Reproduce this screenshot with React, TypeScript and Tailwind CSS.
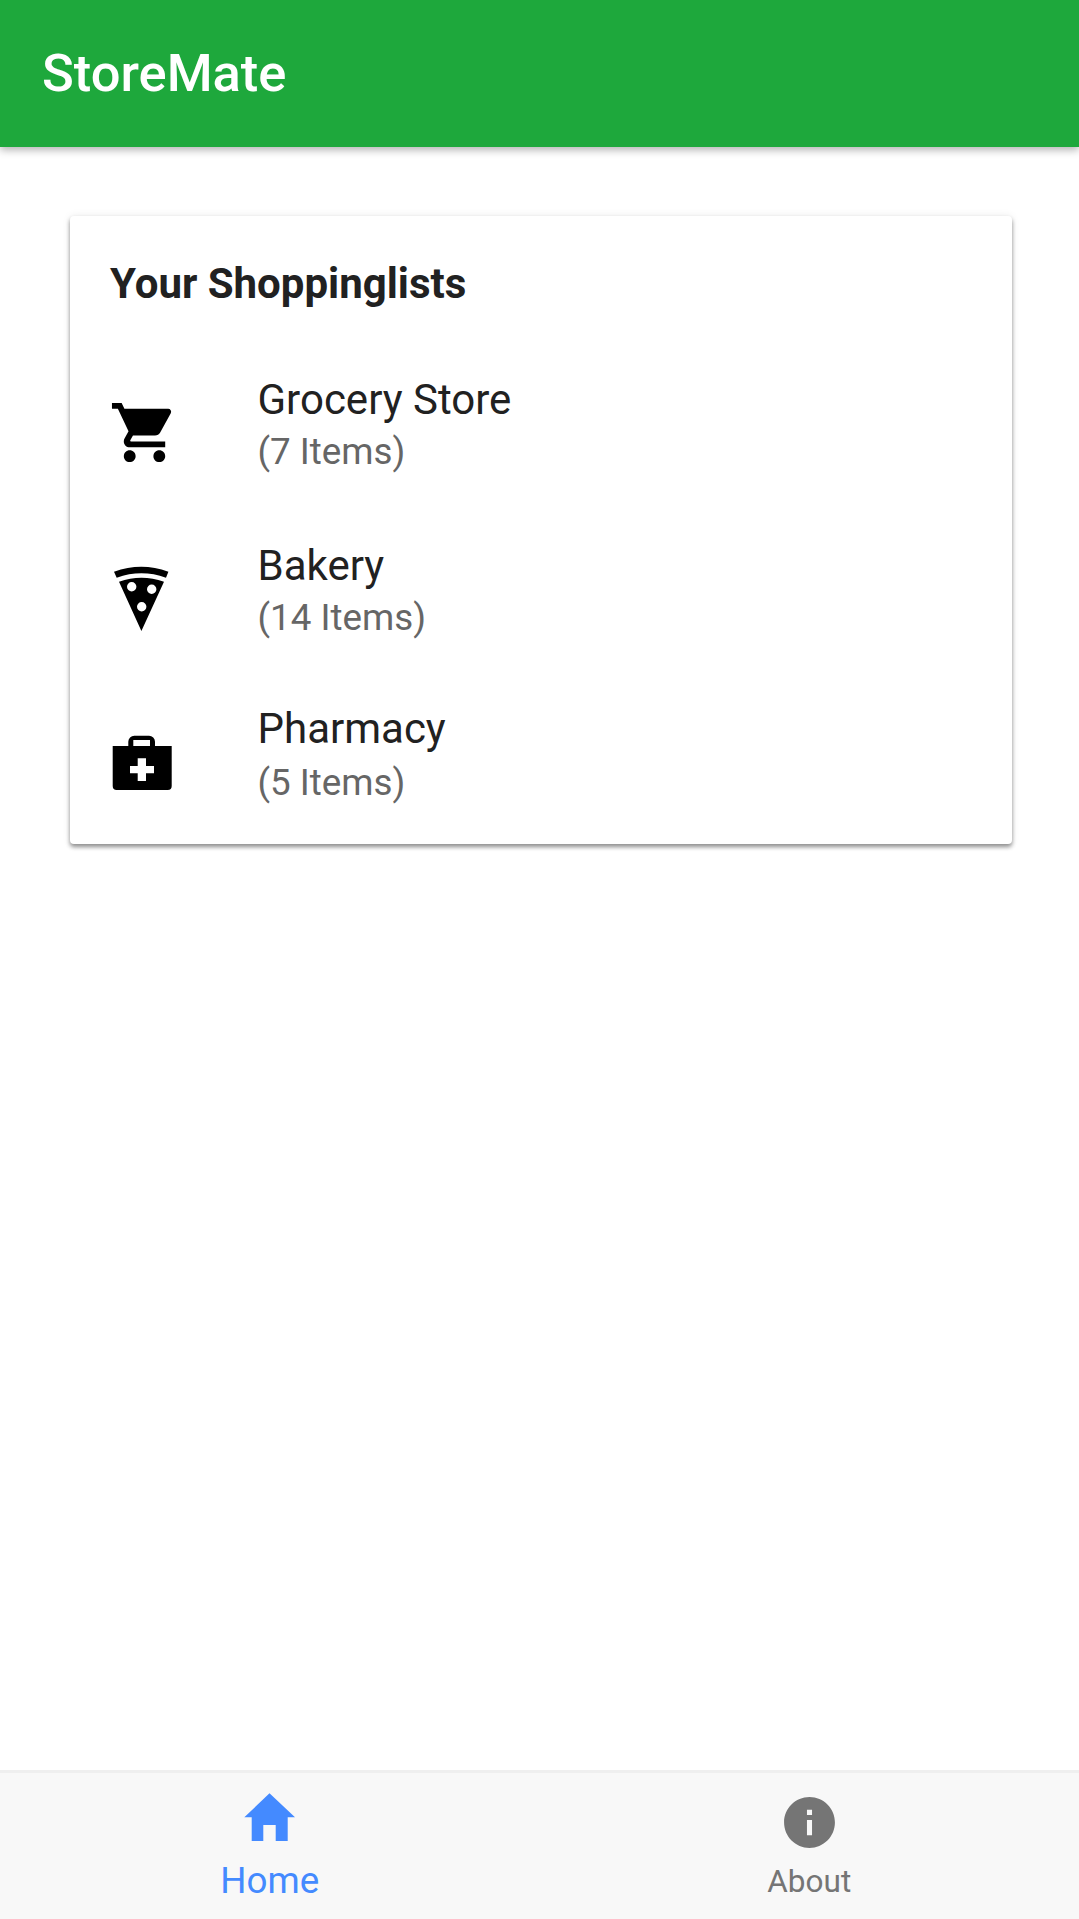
import { MdShoppingCart } from "react-icons/md";

function CartIcon() {
  return <MdShoppingCart className="w-[71px] h-[71px] text-black" />;
}

function PizzaIcon() {
  return (
    <svg viewBox="3.6 0 72 72" className="w-[72px] h-[72px] text-black" fill="currentColor" fillRule="evenodd">
      <path d="M8.6 8.7Q36 -1.2 63 8.7L60.6 14.7Q36 5.8 11.3 14.7Z" />
      <path d="M13.6 18.7Q36 10.8 58.6 18.7L36 68ZM26.3 19A4.7 4.7 0 1 0 26.3 28.4A4.7 4.7 0 1 0 26.3 19ZM46.3 21.6A4.7 4.7 0 1 0 46.3 31A4.7 4.7 0 1 0 46.3 21.6ZM36.3 39A4.7 4.7 0 1 0 36.3 48.4A4.7 4.7 0 1 0 36.3 39Z" />
    </svg>
  );
}

function KitIcon() {
  return (
    <svg viewBox="0 0 72 72" className="w-[72px] h-[72px] text-black" fill="currentColor" fillRule="evenodd">
      <path d="M19.3 19V14.7A6 6 0 0 1 25.3 8.7H40A6 6 0 0 1 46 14.7V19H62.7V59A4 4 0 0 1 58.7 63H7.7A4 4 0 0 1 3.7 59V19ZM24.3 19H41V13H24.3ZM28.7 31.3V39H21V46.3H28.7V54H37V46.3H45V39H37V31.3Z" />
    </svg>
  );
}

function HomeIcon() {
  return (
    <svg viewBox="0 0 64 64" className="w-[64px] h-[64px]" fill="currentColor">
      <path d="M31.5 8.3L57 32.3H49.7V56H37.7V40H25.3V56H13.7V32.3H6.3Z" />
    </svg>
  );
}

function InfoIcon() {
  return (
    <svg viewBox="0 0 24 24" className="w-[61px] h-[61px]" fill="currentColor">
      <path d="M12 2C6.48 2 2 6.48 2 12s4.48 10 10 10 10-4.48 10-10S17.52 2 12 2zm1 15h-2v-6h2v6zm0-8h-2V7h2v2z" />
    </svg>
  );
}

const rows = [
  { icon: <CartIcon />, name: "Grocery Store", count: "(7 Items)", iconCls: "mt-[21px]", titleCls: "", countCls: "mt-[6px]" },
  { icon: <PizzaIcon />, name: "Bakery", count: "(14 Items)", iconCls: "mt-[21px]", titleCls: "", countCls: "mt-[6px]" },
  { icon: <KitIcon />, name: "Pharmacy", count: "(5 Items)", iconCls: "mt-[19px]", titleCls: "-mt-[3px]", countCls: "mt-[8px]" },
];

export default function App() {
  return (
    <div className="h-[1919px] w-[1079px] flex flex-col bg-white font-['Roboto',sans-serif] overflow-hidden">
      <header className="h-[147px] shrink-0 bg-[#1ea83c] flex items-center pl-[42px] shadow-[0_3px_8px_rgba(0,0,0,0.3)] relative z-10">
        <h1 className="text-[52.5px] font-medium text-white leading-none">StoreMate</h1>
      </header>
      <main className="flex-1 pt-[69px] pl-[70px] pr-[67px]">
        <section className="rounded-[4px] bg-white shadow-[0_3px_4px_rgba(0,0,0,0.42),0_0_8px_rgba(0,0,0,0.08)] h-[628px] pl-[40px]">
          <h2 className="pt-[44px] text-[42px] leading-[48px] font-bold text-[#212121]">Your Shoppinglists</h2>
          <ul className="mt-[68px] flex flex-col gap-[29px]">
            {rows.map(({ icon, name, count, iconCls, titleCls, countCls }) => (
              <li key={name} className="h-[137px] flex items-start -ml-[1px]">
                <div className={`w-[72px] mr-[76.5px] shrink-0 ${iconCls}`}>{icon}</div>
                <div className="flex flex-col">
                  <span className={`text-[42px] leading-[48px] text-[#212121] ${titleCls}`}>{name}</span>
                  <span className={`text-[36.75px] leading-[44px] text-[#666666] ${countCls}`}>{count}</span>
                </div>
              </li>
            ))}
          </ul>
        </section>
      </main>
      <nav className="h-[149px] shrink-0 bg-[#f8f8f8] border-t-[3px] border-[#efefef] grid grid-cols-2">
        <div className="flex flex-col items-center pt-[12px] text-[#448aff]">
          <HomeIcon />
          <span className="text-[36.75px] leading-[44px] mt-[9.5px]">Home</span>
        </div>
        <div className="flex flex-col items-center pt-[19px] text-[#757575]">
          <InfoIcon />
          <span className="text-[31.5px] leading-[38px] mt-[10px]">About</span>
        </div>
      </nav>
    </div>
  );
}
